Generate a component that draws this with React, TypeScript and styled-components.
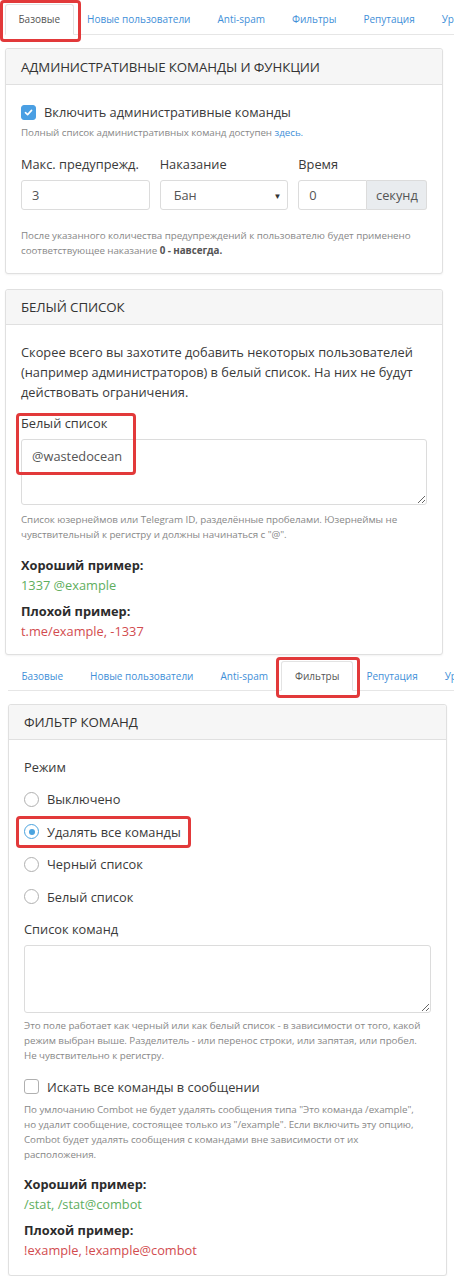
import React from 'react'
import styled, { createGlobalStyle, css } from 'styled-components'

const GlobalStyle = createGlobalStyle`
    html, body {
        margin: 0;
        padding: 0;
        background: #fff;
        overflow-x: hidden;
    }
    body {
        font-family: 'Open Sans', 'Liberation Sans', sans-serif;
        font-size: 12.8px;
        color: #363636;
    }
    * {
        box-sizing: border-box;
    }
`

const BLUE = '#3f8fd8'
const BORDER = '#e0e0e0'
const MARK = '#e2393a'

const marked = css`
    position: absolute;
    border: 3px solid ${MARK};
    border-radius: 4px;
    pointer-events: none;
`

const Page = styled.main`
    width: 100%;
    overflow-x: clip;
`

const Screen = styled.section<{ $left: number; $right: number }>`
    padding: 0 ${(p) => p.$right}px 0 ${(p) => p.$left}px;
`

const TabBar = styled.nav<{ $top: number; $bleed: number }>`
    display: flex;
    flex-wrap: nowrap;
    white-space: nowrap;
    margin: ${(p) => p.$top}px -${(p) => p.$bleed}px 0 0;
    border-bottom: 1px solid #e6e6e6;
`

const Tab = styled.a<{ $active?: boolean; $marked?: boolean; $height: number }>`
    position: relative;
    flex: none;
    display: block;
    height: ${(p) => p.$height}px;
    line-height: ${(p) => p.$height - 2}px;
    padding: 0 12.5px;
    margin-bottom: -1px;
    font-size: 10px;
    color: ${BLUE};
    border: 1px solid transparent;
    border-radius: 3px 3px 0 0;
    cursor: pointer;

    ${(p) =>
        p.$active &&
        css`
            color: #555;
            background: #fff;
            border-color: #e3e3e3 #e3e3e3 #fff;
        `}

    ${(p) =>
        p.$marked &&
        css`
            &::after {
                content: '';
                ${marked};
                left: -6px;
                right: -8px;
                top: -5px;
                bottom: -8px;
            }
        `}
`

const Card = styled.div<{ $top: number }>`
    margin-top: ${(p) => p.$top}px;
    border: 1px solid ${BORDER};
    border-radius: 3px;
    background: #fff;
    box-shadow: 0 1px 2px rgba(0, 0, 0, 0.05);
`

const CardHeader = styled.header<{ $height: number }>`
    display: flex;
    align-items: center;
    height: ${(p) => p.$height}px;
    padding: 0 15px;
    background: #f6f6f6;
    border-bottom: 1px solid ${BORDER};
    border-radius: 3px 3px 0 0;
    font-size: 13.3px;
    letter-spacing: -0.1px;
    color: #333;
    text-transform: uppercase;
`

const CardBody = styled.div<{ $top: number; $bottom: number }>`
    padding: ${(p) => p.$top}px 15px ${(p) => p.$bottom}px;
`

const Lead = styled.p`
    margin: 0;
    font-size: 12.8px;
    line-height: 20px;
    color: #3a3a3a;
`

const Help = styled.p<{ $top: number }>`
    margin: ${(p) => p.$top}px 0 0;
    font-size: 9.8px;
    letter-spacing: -0.05px;
    line-height: 15px;
    color: #888;

    b {
        color: #555;
    }
`

const Link = styled.a`
    color: ${BLUE};
`

const CheckRow = styled.label<{ $top?: number }>`
    display: flex;
    align-items: center;
    gap: 8px;
    height: 20px;
    margin-top: ${(p) => p.$top ?? 0}px;
    font-size: 12.8px;
    color: #3a3a3a;
`

const CheckBox = styled.span<{ $checked?: boolean }>`
    flex: none;
    display: flex;
    align-items: center;
    justify-content: center;
    width: 15px;
    height: 15px;
    border-radius: 3px;
    border: 1px solid ${(p) => (p.$checked ? '#4a9fe3' : '#b0b0b0')};
    background: ${(p) => (p.$checked ? '#4a9fe3' : '#fff')};
`

const FieldLabel = styled.div<{ $top?: number }>`
    height: 20px;
    line-height: 20px;
    margin-top: ${(p) => p.$top ?? 0}px;
    font-size: 12.8px;
    color: #3a3a3a;
`

const FieldGrid = styled.div`
    display: grid;
    grid-template-columns: repeat(3, 1fr);
    column-gap: 10px;
    margin-top: 14px;
`

const Field = styled.div`
    display: flex;
    flex-direction: column;
    gap: 6px;
    min-width: 0;
`

const control = css`
    height: 30px;
    border: 1px solid #dcdcdc;
    border-radius: 3px;
    background: #fff;
    font-family: inherit;
    font-size: 12.8px;
    color: #555;
`

const Input = styled.input`
    ${control};
    width: 100%;
    min-width: 0;
    padding: 0 10px;
    outline: none;
`

const SelectBox = styled.div`
    ${control};
    display: flex;
    align-items: center;
    justify-content: space-between;
    padding: 0 6px 0 13px;
`

const Caret = styled.span`
    font-size: 8px;
    color: #333;
`

const InputGroup = styled.div`
    display: flex;

    input {
        border-radius: 3px 0 0 3px;
        flex: 1;
    }
`

const Addon = styled.span`
    ${control};
    flex: none;
    display: flex;
    align-items: center;
    width: 60px;
    padding: 0 9px;
    background: #e9ecef;
    border-left: none;
    border-radius: 0 3px 3px 0;
`

const TextArea = styled.textarea<{ $height: number; $top?: number }>`
    display: block;
    width: 100%;
    height: ${(p) => p.$height}px;
    margin-top: ${(p) => p.$top ?? 0}px;
    padding: 7px 10px;
    border: 1px solid #dcdcdc;
    border-radius: 3px;
    font-family: inherit;
    font-size: 12.8px;
    line-height: 18px;
    color: #555;
    resize: vertical;
    outline: none;
`

const MarkedField = styled.div<{ $top: number }>`
    position: relative;
    display: flex;
    flex-direction: column;
    gap: 6px;
    margin-top: ${(p) => p.$top}px;
`

const WhitelistMark = styled.span`
    ${marked};
    left: -5px;
    top: 0;
    width: 120px;
    height: 62px;
`

const Examples = styled.div<{ $top: number }>`
    margin-top: ${(p) => p.$top}px;
    display: flex;
    flex-direction: column;
    gap: 7px;
`

const Example = styled.div`
    display: flex;
    flex-direction: column;
`

const ExampleTitle = styled.strong`
    font-size: 12.8px;
    line-height: 19px;
    font-weight: 700;
    color: #2c2c2c;
`

const ExampleText = styled.span<{ $tone: 'good' | 'bad' }>`
    font-size: 12.8px;
    line-height: 20px;
    color: ${(p) => (p.$tone === 'good' ? '#5eae5e' : '#d24c4f')};
`

const RadioGroup = styled.div`
    display: flex;
    flex-direction: column;
    align-items: flex-start;
    gap: 12.6px;
    margin-top: 12px;
`

const RadioRow = styled.label<{ $marked?: boolean }>`
    position: relative;
    display: inline-flex;
    align-items: center;
    gap: 8px;
    height: 20px;
    font-size: 12.8px;
    color: #3a3a3a;

    ${(p) =>
        p.$marked &&
        css`
            &::after {
                content: '';
                ${marked};
                left: -8px;
                right: -10px;
                top: -6px;
                bottom: -6px;
            }
        `}
`

const RadioDot = styled.span<{ $checked?: boolean }>`
    flex: none;
    display: flex;
    align-items: center;
    justify-content: center;
    width: 15px;
    height: 15px;
    border-radius: 50%;
    border: 1px solid ${(p) => (p.$checked ? '#4aa3df' : '#b0b0b0')};
    background: #fff;

    &::before {
        content: '';
        width: 6px;
        height: 6px;
        border-radius: 50%;
        background: ${(p) => (p.$checked ? '#4aa3df' : 'transparent')};
    }
`

const TABS = ['Базовые', 'Новые пользователи', 'Anti-spam', 'Фильтры', 'Репутация', 'Уровни']

const Tabs = ({ active, top, bleed, height }: { active: string; top: number; bleed: number; height: number }) => (
    <TabBar $top={top} $bleed={bleed}>
        {TABS.map((t) => (
            <Tab key={t} $active={t === active} $marked={t === active} $height={height}>
                {t}
            </Tab>
        ))}
    </TabBar>
)

const Tick = () => (
    <svg width="9" height="9" viewBox="0 0 10 10" fill="none">
        <path d="M1.6 5.2 L4 7.4 L8.4 2.6" stroke="#fff" strokeWidth="1.8" strokeLinecap="round" strokeLinejoin="round" />
    </svg>
)

const MODES = ['Выключено', 'Удалять все команды', 'Черный список', 'Белый список']

const App = () => (
    <Page>
        <GlobalStyle />
        <Screen $left={5} $right={11}>
            <Tabs active="Базовые" top={4} bleed={11} height={31} />

            <Card $top={13}>
                <CardHeader $height={36}>Административные команды и функции</CardHeader>
                <CardBody $top={17} $bottom={15.5}>
                    <CheckRow>
                        <CheckBox $checked>
                            <Tick />
                        </CheckBox>
                        Включить административные команды
                    </CheckRow>
                    <Help $top={3}>
                        Полный список административных команд доступен <Link>здесь.</Link>
                    </Help>
                    <FieldGrid>
                        <Field>
                            <FieldLabel>Макс. предупрежд.</FieldLabel>
                            <Input readOnly value="3" />
                        </Field>
                        <Field>
                            <FieldLabel>Наказание</FieldLabel>
                            <SelectBox>
                                Бан <Caret>▼</Caret>
                            </SelectBox>
                        </Field>
                        <Field>
                            <FieldLabel>Время</FieldLabel>
                            <InputGroup>
                                <Input readOnly value="0" />
                                <Addon>секунд</Addon>
                            </InputGroup>
                        </Field>
                    </FieldGrid>
                    <Help $top={17.5}>
                        После указанного количества предупреждений к пользователю будет применено
                        <br />
                        соответствующее наказание <b>0 - навсегда.</b>
                    </Help>
                </CardBody>
            </Card>

            <Card $top={15}>
                <CardHeader $height={35}>Белый список</CardHeader>
                <CardBody $top={17} $bottom={13}>
                    <Lead>
                        Скорее всего вы захотите добавить некоторых пользователей (например администраторов) в белый
                        список. На них не будут действовать ограничения.
                    </Lead>
                    <MarkedField $top={11}>
                        <FieldLabel>Белый список</FieldLabel>
                        <TextArea $height={66} readOnly defaultValue="@wastedocean" />
                        <WhitelistMark />
                    </MarkedField>
                    <Help $top={7}>
                        Список юзернеймов или Telegram ID, разделённые пробелами. Юзернеймы не
                        <br />
                        чувствительный к регистру и должны начинаться с "@".
                    </Help>
                    <Examples $top={14}>
                        <Example>
                            <ExampleTitle>Хороший пример:</ExampleTitle>
                            <ExampleText $tone="good">1337 @example</ExampleText>
                        </Example>
                        <Example>
                            <ExampleTitle>Плохой пример:</ExampleTitle>
                            <ExampleText $tone="bad">t.me/example, -1337</ExampleText>
                        </Example>
                    </Examples>
                </CardBody>
            </Card>
        </Screen>

        <Screen $left={8} $right={7}>
            <Tabs active="Фильтры" top={6} bleed={7} height={30} />

            <Card $top={13}>
                <CardHeader $height={35}>Фильтр команд</CardHeader>
                <CardBody $top={17} $bottom={15}>
                    <FieldLabel>Режим</FieldLabel>
                    <RadioGroup>
                        {MODES.map((m, i) => (
                            <RadioRow key={m} $marked={i === 1}>
                                <RadioDot $checked={i === 1} />
                                {m}
                            </RadioRow>
                        ))}
                    </RadioGroup>
                    <FieldLabel $top={12}>Список команд</FieldLabel>
                    <TextArea $height={68} $top={6} readOnly defaultValue="" />
                    <Help $top={5.5}>
                        Это поле работает как черный или как белый список - в зависимости от того, какой
                        <br />
                        режим выбран выше. Разделитель - или перенос строки, или запятая, или пробел.
                        <br />
                        Не чувствительно к регистру.
                    </Help>
                    <CheckRow $top={13.5}>
                        <CheckBox />
                        Искать все команды в сообщении
                    </CheckRow>
                    <Help $top={5.5}>
                        По умлочанию Combot не будет удалять сообщения типа "Это команда /example",
                        <br />
                        но удалит сообщение, состоящее только из "/example". Если включить эту опцию,
                        <br />
                        Combot будет удалять сообщения с командами вне зависимости от их
                        <br />
                        расположения.
                    </Help>
                    <Examples $top={12.5}>
                        <Example>
                            <ExampleTitle>Хороший пример:</ExampleTitle>
                            <ExampleText $tone="good">/stat, /stat@combot</ExampleText>
                        </Example>
                        <Example>
                            <ExampleTitle>Плохой пример:</ExampleTitle>
                            <ExampleText $tone="bad">!example, !example@combot</ExampleText>
                        </Example>
                    </Examples>
                </CardBody>
            </Card>
        </Screen>
    </Page>
)

export default App
